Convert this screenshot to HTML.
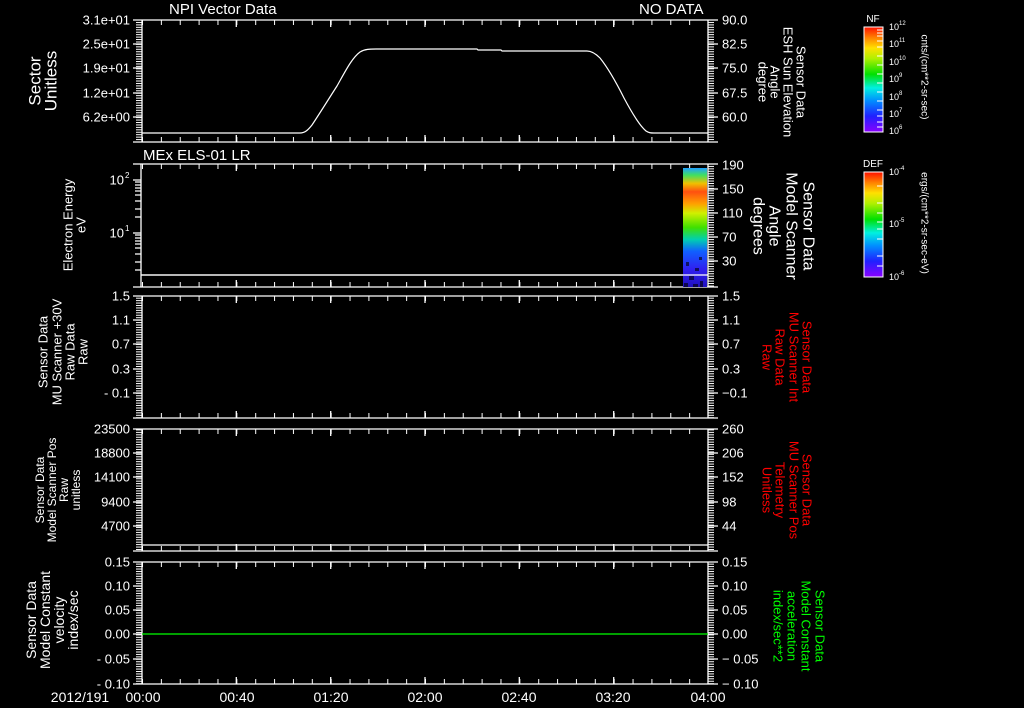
<!DOCTYPE html>
<html><head><meta charset="utf-8"><style>
html,body{margin:0;padding:0;background:#000;}
svg{display:block}
text{font-family:"Liberation Sans",sans-serif;fill:#fff}
</style></head><body>
<svg width="1024" height="708" viewBox="0 0 1024 708" xmlns="http://www.w3.org/2000/svg">
<defs>
<pattern id="mt" x="0" y="0" width="10" height="2.44" patternUnits="userSpaceOnUse"><rect x="0" y="0" width="10" height="1" fill="#fff"/></pattern>
<pattern id="tt" x="142" y="0" width="18.867" height="10" patternUnits="userSpaceOnUse"><rect x="0" y="0" width="1" height="10" fill="#fff"/></pattern>
<linearGradient id="rb" x1="0" y1="1" x2="0" y2="0">
<stop offset="0" stop-color="#8a00ff"/><stop offset="0.15" stop-color="#2020ff"/><stop offset="0.3" stop-color="#0090ff"/><stop offset="0.42" stop-color="#00f0e0"/><stop offset="0.55" stop-color="#00e000"/><stop offset="0.7" stop-color="#b0f000"/><stop offset="0.8" stop-color="#ffe000"/><stop offset="0.9" stop-color="#ff8000"/><stop offset="1" stop-color="#ff1000"/>
</linearGradient>
<linearGradient id="sp" x1="0" y1="0" x2="0" y2="1">
<stop offset="0" stop-color="#20a0ff"/><stop offset="0.06" stop-color="#40e060"/><stop offset="0.13" stop-color="#f0c000"/><stop offset="0.2" stop-color="#ff5010"/><stop offset="0.3" stop-color="#ffa000"/><stop offset="0.38" stop-color="#d0f000"/><stop offset="0.5" stop-color="#40e000"/><stop offset="0.6" stop-color="#00d0b0"/><stop offset="0.7" stop-color="#1060ff"/><stop offset="0.85" stop-color="#3020f0"/><stop offset="1" stop-color="#2010c0"/>
</linearGradient>
</defs>
<rect width="1024" height="708" fill="#000"/>

<!-- titles -->
<text x="169" y="14" font-size="15">NPI Vector Data</text>
<text x="639" y="14" font-size="15">NO DATA</text>
<text x="143" y="160" font-size="15">MEx ELS-01 LR</text>

<g stroke="#fff" stroke-width="1.3" fill="none">
<!-- panel frames -->
<path d="M133 20H718M133 142H718M142 20V142M708 20V142"/>
<path d="M133 164H718M133 287H718M141 164V287M708 164V287M141 275H708"/>
<path d="M133 296H718M133 418H718M142 296V418M708 296V418"/>
<path d="M133 429H718M133 551H718M142 429V551M708 429V551M142 545H708"/>
<path d="M133 562H718M133 684H718M142 562V684M708 562V684"/>
<!-- time major ticks -->
<path d="M236.3 20v7M330.7 20v7M425 20v7M519.3 20v7M613.7 20v7M236.3 142v-7M330.7 142v-7M425 142v-7M519.3 142v-7M613.7 142v-7"/>
<path d="M236.3 164v7M330.7 164v7M425 164v7M519.3 164v7M613.7 164v7M236.3 287v-7M330.7 287v-7M425 287v-7M519.3 287v-7M613.7 287v-7"/>
<path d="M236.3 296v7M330.7 296v7M425 296v7M519.3 296v7M613.7 296v7M236.3 418v-7M330.7 418v-7M425 418v-7M519.3 418v-7M613.7 418v-7"/>
<path d="M236.3 429v7M330.7 429v7M425 429v7M519.3 429v7M613.7 429v7M236.3 551v-7M330.7 551v-7M425 551v-7M519.3 551v-7M613.7 551v-7"/>
<path d="M236.3 562v7M330.7 562v7M425 562v7M519.3 562v7M613.7 562v7M236.3 684v-7M330.7 684v-7M425 684v-7M519.3 684v-7M613.7 684v-7"/>
<!-- y major ticks -->
<path d="M133 44H142M133 68H142M133 93H142M133 117H142M708 44H718M708 68H718M708 93H718M708 117H718"/>
<path d="M708 189H718M708 213H718M708 237H718M708 261H718M133 180H141M133 233H141"/>
<path d="M133 320H142M133 344H142M133 369H142M133 393H142M708 320H718M708 344H718M708 369H718M708 393H718"/>
<path d="M133 453H142M133 477H142M133 502H142M133 526H142M708 453H718M708 477H718M708 502H718M708 526H718"/>
<path d="M133 586H142M133 610H142M133 634H142M133 659H142M708 586H718M708 610H718M708 634H718M708 659H718"/>
<!-- log minor ticks panel 2 -->
<path d="M135 182H141M135 185H141M135 188H141M135 191H141M135 195H141M135 201H141M135 209H141M135 217H141M135 235H141M135 238H141M135 241H141M135 244H141M135 248H141M135 254H141M135 262H141M135 270H141"/>
<!-- curve -->
<path d="M142 133H300C305 133 308 130 312 125C320 113 328 100 337 86C346 70 352 58 360 52C365 49 370 49 376 49H477L478 50H501L502 51H587C592 51 596 54 600 58C608 68 616 82 624 98C632 113 640 126 646 131C649 133 651 133 654 133H708" stroke-width="1.2"/>
</g>
<!-- minor tick patterns -->
<g fill="url(#mt)">
<rect x="136" y="20" width="6" height="122"/><rect x="708" y="20" width="6" height="122"/>
<rect x="708" y="164" width="6" height="123"/>
<rect x="136" y="296" width="6" height="122"/><rect x="708" y="296" width="6" height="122"/>
<rect x="136" y="429" width="6" height="122"/><rect x="708" y="429" width="6" height="122"/>
<rect x="136" y="562" width="6" height="122"/><rect x="708" y="562" width="6" height="122"/>
</g>
<g fill="url(#tt)">
<rect x="142" y="20" width="566" height="5"/><rect x="142" y="137" width="566" height="5"/>
<rect x="142" y="164" width="566" height="5"/><rect x="142" y="282" width="566" height="5"/>
<rect x="142" y="296" width="566" height="5"/><rect x="142" y="413" width="566" height="5"/>
<rect x="142" y="429" width="566" height="5"/><rect x="142" y="546" width="566" height="5"/>
<rect x="142" y="562" width="566" height="5"/><rect x="142" y="679" width="566" height="5"/>
</g>
<!-- spectrogram -->
<rect x="683" y="168" width="24" height="119" fill="url(#sp)"/>
<g fill="#000" opacity="0.6">
<rect x="686" y="262" width="3" height="4"/><rect x="695" y="268" width="4" height="3"/><rect x="689" y="276" width="5" height="4"/><rect x="700" y="281" width="3" height="6"/><rect x="684" y="283" width="4" height="4"/><rect x="693" y="284" width="5" height="3"/><rect x="699" y="257" width="3" height="3"/>
</g>
<line x1="141" y1="275" x2="708" y2="275" stroke="#fff" stroke-width="1.3"/>
<!-- green line -->
<line x1="142" y1="634" x2="708" y2="634" stroke="#00ff00" stroke-width="1.3"/>

<!-- left tick labels -->
<g font-size="13" text-anchor="end" dominant-baseline="central">
<text x="130" y="20">3.1e+01</text><text x="130" y="44">2.5e+01</text><text x="130" y="68">1.9e+01</text><text x="130" y="93">1.2e+01</text><text x="130" y="117">6.2e+00</text>
<text x="124" y="180">10</text><text x="124" y="233">10</text>
<text x="130" y="296">1.5</text><text x="130" y="320">1.1</text><text x="130" y="344">0.7</text><text x="130" y="369">0.3</text><text x="130" y="393">- 0.1</text>
<text x="130" y="429">23500</text><text x="130" y="453">18800</text><text x="130" y="477">14100</text><text x="130" y="502">9400</text><text x="130" y="526">4700</text>
<text x="130" y="562">0.15</text><text x="130" y="586">0.10</text><text x="130" y="610">0.05</text><text x="130" y="634">0.00</text><text x="130" y="659">- 0.05</text><text x="130" y="684">- 0.10</text>
</g>
<g font-size="8"><text x="125" y="178">2</text><text x="125" y="231">1</text></g>
<!-- right tick labels -->
<g font-size="13" dominant-baseline="central">
<text x="722" y="20">90.0</text><text x="722" y="44">82.5</text><text x="722" y="68">75.0</text><text x="722" y="93">67.5</text><text x="722" y="117">60.0</text>
<text x="722" y="165">190</text><text x="722" y="189">150</text><text x="722" y="213">110</text><text x="722" y="237">70</text><text x="722" y="261">30</text>
<text x="722" y="296">1.5</text><text x="722" y="320">1.1</text><text x="722" y="344">0.7</text><text x="722" y="369">0.3</text><text x="722" y="393">−0.1</text>
<text x="722" y="429">260</text><text x="722" y="453">206</text><text x="722" y="477">152</text><text x="722" y="502">98</text><text x="722" y="526">44</text>
<text x="722" y="562">0.15</text><text x="722" y="586">0.10</text><text x="722" y="610">0.05</text><text x="722" y="634">0.00</text><text x="722" y="659">− 0.05</text><text x="722" y="684">− 0.10</text>
</g>
<!-- time labels -->
<g font-size="14" text-anchor="middle">
<text x="80" y="702">2012/191</text><text x="143" y="702">00:00</text><text x="237" y="702">00:40</text><text x="331" y="702">01:20</text><text x="425" y="702">02:00</text><text x="519" y="702">02:40</text><text x="613" y="702">03:20</text><text x="708" y="702">04:00</text>
</g>

<!-- left axis titles (rotated -90) -->
<g text-anchor="middle" dominant-baseline="central">
<text transform="translate(35,81) rotate(-90)" font-size="17">Sector</text>
<text transform="translate(51,81) rotate(-90)" font-size="17">Unitless</text>
<text transform="translate(68,225) rotate(-90)" font-size="13">Electron Energy</text>
<text transform="translate(81,225) rotate(-90)" font-size="13">eV</text>
<text transform="translate(43,352) rotate(-90)" font-size="13">Sensor Data</text>
<text transform="translate(57,352) rotate(-90)" font-size="13">MU Scanner +30V</text>
<text transform="translate(70,352) rotate(-90)" font-size="13">Raw Data</text>
<text transform="translate(83,352) rotate(-90)" font-size="13">Raw</text>
<text transform="translate(40,490) rotate(-90)" font-size="12">Sensor Data</text>
<text transform="translate(52,490) rotate(-90)" font-size="12">Model Scanner Pos</text>
<text transform="translate(64,490) rotate(-90)" font-size="12">Raw</text>
<text transform="translate(76,490) rotate(-90)" font-size="12">unitless</text>
<text transform="translate(31,620) rotate(-90)" font-size="14">Sensor Data</text>
<text transform="translate(45,620) rotate(-90)" font-size="14">Model Constant</text>
<text transform="translate(59,620) rotate(-90)" font-size="14">velocity</text>
<text transform="translate(73,620) rotate(-90)" font-size="14">index/sec</text>
</g>
<!-- right axis titles (rotated 90) -->
<g text-anchor="middle" dominant-baseline="central">
<text transform="translate(801,82) rotate(90)" font-size="13">Sensor Data</text>
<text transform="translate(788,82) rotate(90)" font-size="13">ESH Sun Elevation</text>
<text transform="translate(775,82) rotate(90)" font-size="13">Angle</text>
<text transform="translate(763,82) rotate(90)" font-size="13">degree</text>
<text transform="translate(808,226) rotate(90)" font-size="16">Sensor Data</text>
<text transform="translate(791,226) rotate(90)" font-size="16">Model Scanner</text>
<text transform="translate(774,226) rotate(90)" font-size="16">Angle</text>
<text transform="translate(758,226) rotate(90)" font-size="16">degrees</text>
<g style="fill:#ff0000" font-size="13">
<text transform="translate(807,357) rotate(90)" style="fill:#f00">Sensor Data</text>
<text transform="translate(794,357) rotate(90)" style="fill:#f00">MU Scanner Int</text>
<text transform="translate(780,357) rotate(90)" style="fill:#f00">Raw Data</text>
<text transform="translate(767,357) rotate(90)" style="fill:#f00">Raw</text>
<text transform="translate(807,490) rotate(90)" style="fill:#f00">Sensor Data</text>
<text transform="translate(794,490) rotate(90)" style="fill:#f00">MU Scanner Pos</text>
<text transform="translate(780,490) rotate(90)" style="fill:#f00">Telemetry</text>
<text transform="translate(767,490) rotate(90)" style="fill:#f00">Unitless</text>
</g>
<text transform="translate(820,626) rotate(90)" font-size="13" style="fill:#0f0">Sensor Data</text>
<text transform="translate(806,626) rotate(90)" font-size="13" style="fill:#0f0">Model Constant</text>
<text transform="translate(792,626) rotate(90)" font-size="13" style="fill:#0f0">acceleration</text>
<text transform="translate(778,626) rotate(90)" font-size="13" style="fill:#0f0">index/sec**2</text>
</g>

<!-- colorbars -->
<rect x="864" y="27" width="19" height="105" fill="url(#rb)" stroke="#fff" stroke-width="1"/>
<rect x="864" y="172" width="19" height="105" fill="url(#rb)" stroke="#fff" stroke-width="1"/>
<g stroke="#fff" stroke-width="1">
<path d="M877 30H883M877 33H883M877 36H883M877 41H883M877 47H883M877 56H883M877 65H883M877 74H883M877 83H883M877 92H883M877 101H883M877 110H883M877 116H883M877 122H883M877 127H883"/>
<path d="M877 186H883M877 203H883M877 213H883M877 222H883M877 229H883M877 239H883M877 256H883M877 266H883"/>
</g>
<text x="873" y="22" font-size="10" text-anchor="middle">NF</text>
<text x="873" y="167" font-size="10" text-anchor="middle">DEF</text>
<g font-size="9" dominant-baseline="central">
<text x="889" y="27">10<tspan font-size="6" dy="-3">12</tspan></text>
<text x="889" y="44">10<tspan font-size="6" dy="-3">11</tspan></text>
<text x="889" y="62">10<tspan font-size="6" dy="-3">10</tspan></text>
<text x="889" y="79">10<tspan font-size="6" dy="-3">9</tspan></text>
<text x="889" y="97">10<tspan font-size="6" dy="-3">8</tspan></text>
<text x="889" y="114">10<tspan font-size="6" dy="-3">7</tspan></text>
<text x="889" y="131">10<tspan font-size="6" dy="-3">6</tspan></text>
<text x="889" y="172">10<tspan font-size="6" dy="-3">-4</tspan></text>
<text x="889" y="224">10<tspan font-size="6" dy="-3">-5</tspan></text>
<text x="889" y="277">10<tspan font-size="6" dy="-3">-6</tspan></text>
</g>
<g text-anchor="middle" dominant-baseline="central" font-size="10">
<text transform="translate(924,77) rotate(90)">cnts/(cm**2-sr-sec)</text>
<text transform="translate(924,223) rotate(90)">ergs/(cm**2-sr-sec-eV)</text>
</g>
</svg>
</body></html>
